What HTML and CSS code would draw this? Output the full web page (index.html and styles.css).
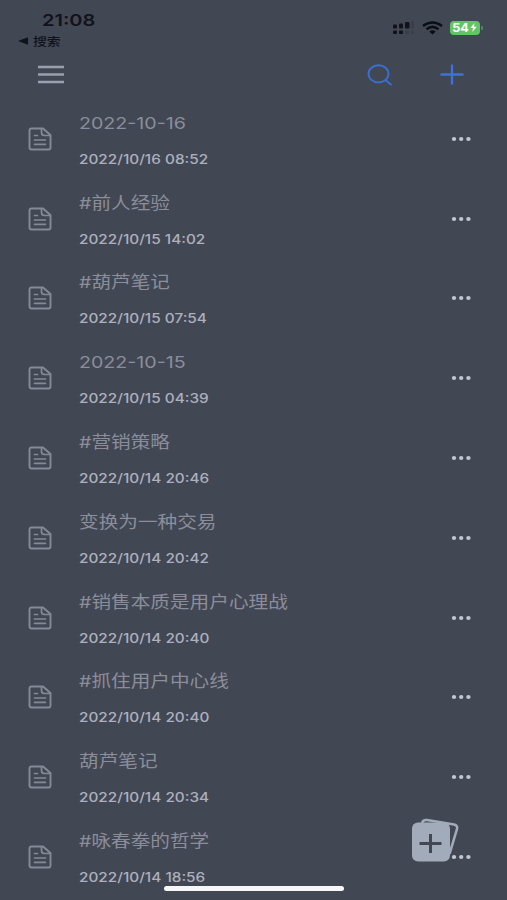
FILE: index.html
```
<!DOCTYPE html>
<html lang="zh-CN">
<head>
    <meta charset="UTF-8">
    <meta name="viewport" content="width=device-width, initial-scale=1.0">
    <title>葫芦笔记</title>
    <link rel="stylesheet" href="styles.css">
</head>
<body>
    <div class="status-bar">
        <div class="status-left">
            <div class="clock"><span>21:08</span></div>
            <div class="back"><svg width="10" height="8" viewBox="0 0 10 8"><path d="M0 4L10 0.3V7.7Z" fill="#11131b"/></svg><span>搜索</span></div>
        </div>
        <div class="status-right">
            <svg class="signal" width="24" height="14" viewBox="0 0 24 14">
                <g fill="#11131b">
                    <rect x="1" y="3.5" width="4" height="4" rx="1"/>
                    <rect x="7" y="2.5" width="4" height="5" rx="1"/>
                    <rect x="13" y="1" width="4.5" height="6.5" rx="1"/>
                    <rect x="1" y="9.5" width="4" height="3.5" rx="1"/>
                    <rect x="7" y="9.5" width="4" height="3.5" rx="1"/>
                </g>
                <g fill="#3a3e4a">
                    <rect x="19" y="0" width="3" height="7.5" rx="1"/>
                    <rect x="13" y="9.5" width="4" height="3.5" rx="1"/>
                    <rect x="19" y="9.5" width="3" height="3.5" rx="1"/>
                </g>
            </svg>
            <svg class="wifi" width="21" height="14" viewBox="0 0 21 14">
                <g fill="none" stroke="#0c0e15" stroke-width="2.5">
                    <path d="M1 5Q10.5 -2 20 5"/>
                    <path d="M4.5 8.3Q10.5 3.5 16.5 8.3"/>
                </g>
                <path d="M7.3 10.5Q10.5 8 13.7 10.5L10.5 13.5Z" fill="#0c0e15"/>
            </svg>
            <div class="battery"><span>54</span><svg width="7" height="9" viewBox="0 0 7 9"><path d="M4.5 0L0.3 5.1H3L2.3 9L6.7 3.7H4Z" fill="#fff"/></svg></div>
        </div>
    </div>

    <div class="toolbar">
        <svg class="menu" width="26" height="19" viewBox="0 0 26 19"><path d="M0 2H26M0 9.5H26M0 17H26" stroke="#9b9faf" stroke-width="2.4"/></svg>
        <svg class="search" width="26" height="22" viewBox="0 0 26 22" fill="none" stroke="#3a6fd2" stroke-width="1.9" stroke-linecap="round"><ellipse cx="11.5" cy="9.8" rx="10" ry="8.6"/><path d="M18.5 16.2L24 20.5"/></svg>
        <svg class="plus" width="24" height="21" viewBox="0 0 24 21"><path d="M0.5 10.5H23.5M12 0.5V20.5" stroke="#3c72dc" stroke-width="2.3"/></svg>
    </div>

    <div class="notes" id="notes"></div>

    <svg class="add-card" width="50" height="46" viewBox="0 0 50 46">
        <path d="M12 6Q13 2.5 17 3L44 7.5Q48 8.5 47 12L39.5 37" fill="none" stroke="#a2abb9" stroke-width="2.6"/>
        <rect x="2" y="5.5" width="38" height="39" rx="6" fill="#a2abb9"/>
        <path d="M9.500 26.5H31.5M20.5 17V36" stroke="#424754" stroke-width="3"/>
    </svg>
    <div class="home-bar"></div>

    <script>
        const notes = [
            ["2022-10-16", "2022/10/16 08:52"],
            ["#前人经验", "2022/10/15 14:02"],
            ["#葫芦笔记", "2022/10/15 07:54"],
            ["2022-10-15", "2022/10/15 04:39"],
            ["#营销策略", "2022/10/14 20:46"],
            ["变换为一种交易", "2022/10/14 20:42"],
            ["#销售本质是用户心理战", "2022/10/14 20:40"],
            ["#抓住用户中心线", "2022/10/14 20:40"],
            ["葫芦笔记", "2022/10/14 20:34"],
            ["#咏春拳的哲学", "2022/10/14 18:56"]
        ];
        document.getElementById("notes").innerHTML = notes.map(([title, time]) => `
            <div class="note">
                <svg class="file" width="24" height="24" viewBox="0 0 24 24" fill="none" stroke="#868a97" stroke-width="1.9" stroke-linejoin="round" stroke-linecap="round">
                    <path d="M3.5 1.5H15L22.5 8V20.5Q22.5 22.5 20.5 22.5H3.5Q1.5 22.5 1.5 20.5V3.5Q1.5 1.5 3.5 1.5Z"/>
                    <path d="M13.5 1.8V5.5Q13.5 8.5 16.5 8.5H22M6.5 8.5H9.500M6.5 13H17.5M6.5 17.3H17.5" stroke-width="1.7"/>
                </svg>
                <div class="info">
                    <div class="title">${title}</div>
                    <div class="time">${time}</div>
                </div>
                <svg class="more" width="20" height="6" viewBox="0 0 20 6" fill="#c3c6d0"><ellipse cx="3" cy="3" rx="2.2" ry="1.9"/><ellipse cx="10.2" cy="3" rx="2.2" ry="1.9"/><ellipse cx="17.4" cy="3" rx="2.2" ry="1.9"/></svg>
            </div>`).join("");
    </script>
</body>
</html>
```
FILE: styles.css
```
* {
    box-sizing: border-box;
}
body {
    margin: 0;
    height: 900px;
    overflow: hidden;
    position: relative;
    background-color: #424754;
    font-family: Inter, "Noto Sans CJK SC", sans-serif;
}
svg {
    display: block;
    flex: none;
}
.status-bar {
    height: 50px;
    display: flex;
    justify-content: space-between;
    color: #11131b;
}
.status-left {
    padding: 10px 0 0 18px;
}
.clock {
    padding-left: 24px;
    height: 21px;
    line-height: 21px;
    font-size: 16px;
    font-weight: 600;
}
.clock span,
.back span {
    display: inline-block;
    transform: scaleX(1.25);
    transform-origin: left center;
}
.back {
    display: flex;
    align-items: center;
    gap: 5px;
    height: 20px;
    font-size: 11.5px;
    font-weight: 500;
}
.back span {
    transform: scaleX(1.2);
}
.status-right {
    display: flex;
    align-items: center;
    height: 55px;
    padding-right: 27px;
}
.wifi {
    margin-left: 6px;
}
.battery {
    position: relative;
    display: flex;
    align-items: center;
    justify-content: center;
    gap: 2px;
    width: 30px;
    height: 14px;
    margin-left: 7px;
    border-radius: 4px;
    background-color: #63c466;
    color: #fff;
    font-size: 11.5px;
    font-weight: 700;
}
.battery span {
    transform: scaleX(1.1);
}
.battery::after {
    content: "";
    position: absolute;
    right: -3px;
    top: 5px;
    width: 2px;
    height: 4px;
    border-radius: 1px;
    background-color: #4d8a5d;
}
.toolbar {
    display: flex;
    align-items: center;
    height: 49px;
    padding: 0 43px 0 38px;
}
.search {
    margin-left: auto;
}
.plus {
    margin-left: 47px;
}
.note {
    display: flex;
    align-items: center;
    height: 79.8px;
    padding: 0 36px 0 28px;
}
.info {
    flex: 1;
    margin-left: 27px;
    white-space: nowrap;
}
.title,
.time {
    width: max-content;
    transform: scaleX(1.19);
    transform-origin: left center;
}
.title {
    height: 40px;
    line-height: 40px;
    font-size: 16.5px;
    color: #8b8e9a;
}
.time {
    height: 32px;
    line-height: 32px;
    font-size: 13px;
    font-weight: 500;
    color: #acb0bd;
    transform: scaleX(1.18);
}
.add-card {
    position: absolute;
    left: 410px;
    top: 817px;
}
.home-bar {
    position: absolute;
    left: 164px;
    top: 886px;
    width: 180px;
    height: 5px;
    border-radius: 3px;
    background-color: #f7f7f9;
}
```
